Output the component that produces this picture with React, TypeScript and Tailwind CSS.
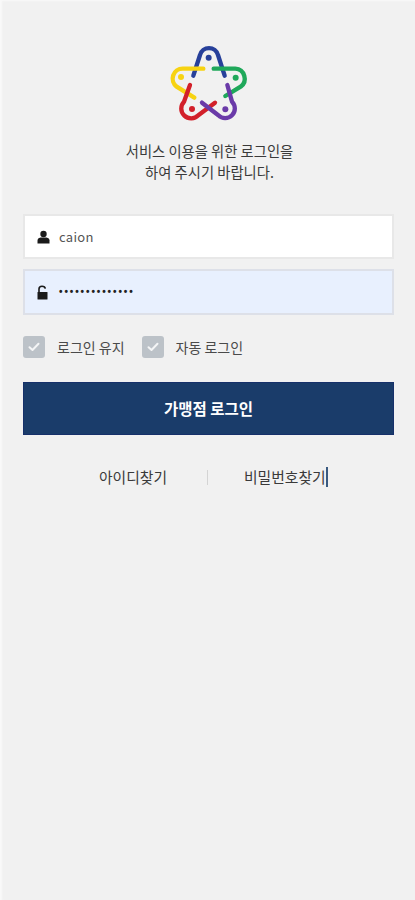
import React from "react";

function Logo() {
  return (
    <svg width="115" height="110" viewBox="0 0 345 330" fill="none" strokeWidth="13" strokeLinecap="round" strokeLinejoin="round">
      <path d="M130 134 L150 72 A28 28 0 0 1 204 72 L224 134" stroke="#27409a" />
      <circle cx="176" cy="80" r="9" fill="#27409a" />
      <path d="M160 113 H98 A30 30 0 0 0 80 167 L133 200" stroke="#f7d312" />
      <circle cx="93" cy="138" r="9" fill="#f7d312" />
      <path d="M191 113 H256 A30 30 0 0 1 272 167 L226 195" stroke="#1fa85a" />
      <circle cx="257" cy="140" r="9" fill="#1fa85a" />
      <path d="M120 162 L102 212 A28 28 0 0 0 145 253 L195 215" stroke="#d2202a" />
      <circle cx="126" cy="234" r="9" fill="#d2202a" />
      <path d="M156 215 L205 253 A28 28 0 0 0 246 212 L232 162" stroke="#6a3aa8" />
      <circle cx="226" cy="235" r="9" fill="#6a3aa8" />
    </svg>
  );
}

function UserIcon() {
  return (
    <svg width="13" height="14" viewBox="0 0 13 14" fill="#1a1a1a" className="shrink-0">
      <circle cx="6.5" cy="4" r="3.2" />
      <path d="M0.5 13.5 V10.5 Q0.5 8 3.5 7.5 H9.5 Q12.5 8 12.5 10.5 V13.5 Z" />
    </svg>
  );
}

function LockIcon() {
  return (
    <svg width="11" height="15" viewBox="0 0 11 15" className="shrink-0">
      <path d="M2 7 V4 Q2 1.2 5 1.2 Q8 1.2 8.3 3.6" fill="none" stroke="#1a1a1a" strokeWidth="1.6" />
      <rect x="0.5" y="7" width="10" height="7.5" rx="0.5" fill="#1a1a1a" />
    </svg>
  );
}

function Check({ label }: { label: string }) {
  return (
    <label className="flex items-center gap-[12px]">
      <span className="flex h-[22px] w-[22px] items-center justify-center rounded-[3px] bg-[#bcc2c8]">
        <svg width="12" height="10" viewBox="0 0 12 10" fill="none" stroke="#f4f5f6" strokeWidth="2" strokeLinecap="round" strokeLinejoin="round">
          <path d="M1.5 5.2 L4.5 8 L10.5 1.8" />
        </svg>
      </span>
      <span className="text-[14px] leading-[22px] text-[#4a4a4a]">{label}</span>
    </label>
  );
}

export default function App() {
  return (
    <div className="flex min-h-[900px] w-full flex-col bg-[#f1f1f1] pl-[23px] pr-[21px] pt-[39px] text-[#333] shadow-[inset_2px_1px_2px_#f9f9f9]">
      <div className="flex flex-col items-center font-['Noto_Sans_CJK_KR','Noto_Sans',sans-serif]">
        <div className="mr-[2px] flex h-[94px] items-center justify-center">
          <div className="-my-2"><Logo /></div>
        </div>
        <p className="ml-[2px] mt-[7px] text-center text-[14.3px] leading-[21px] text-[#3a3a3a]">
          서비스 이용을 위한 로그인을
          <br />
          하여 주시기 바랍니다.
        </p>
      </div>

      <div className="mt-[32px] flex flex-col gap-[10px] font-['Noto_Sans_CJK_KR','Noto_Sans',sans-serif]">
        <div className="flex h-[45px] items-center gap-[9px] border-2 border-[#e8e8e8] bg-white pl-[12px]">
          <UserIcon />
          <span className="text-[13px] tracking-[0.3px] text-[#555]">caion</span>
        </div>
        <div className="flex h-[46px] items-center gap-[11px] border-2 border-[#dde0e8] bg-[#e8f0fe] pl-[12px]">
          <LockIcon />
          <span className="font-['Liberation_Sans',sans-serif] text-[10px] font-bold leading-none tracking-[1.9px] text-[#222]">
            ••••••••••••••
          </span>
        </div>
      </div>

      <div className="mt-[21px] flex items-center gap-[17px] font-['Noto_Sans_CJK_KR','Noto_Sans',sans-serif]">
        <Check label="로그인 유지" />
        <Check label="자동 로그인" />
      </div>

      <button className="mt-[24px] h-[53px] w-[371px] border border-[#16306a] bg-[#1a3c6a] text-[15.5px] font-bold text-white font-['Noto_Sans_CJK_KR','Noto_Sans',sans-serif]">
        가맹점 로그인
      </button>

      <div className="mt-[31px] flex items-center font-['Noto_Sans_CJK_KR','Noto_Sans',sans-serif] text-[14.8px] leading-[22px] text-[#3a3a3a]">
        <span className="w-[184px] whitespace-nowrap pl-[76px]">아이디찾기</span>
        <span className="h-[15px] w-px bg-[#d4d4d4]" />
        <span className="ml-[36px] whitespace-nowrap border-r-2 border-[#3a5a80] leading-[20px]">비밀번호찾기</span>
      </div>
    </div>
  );
}
